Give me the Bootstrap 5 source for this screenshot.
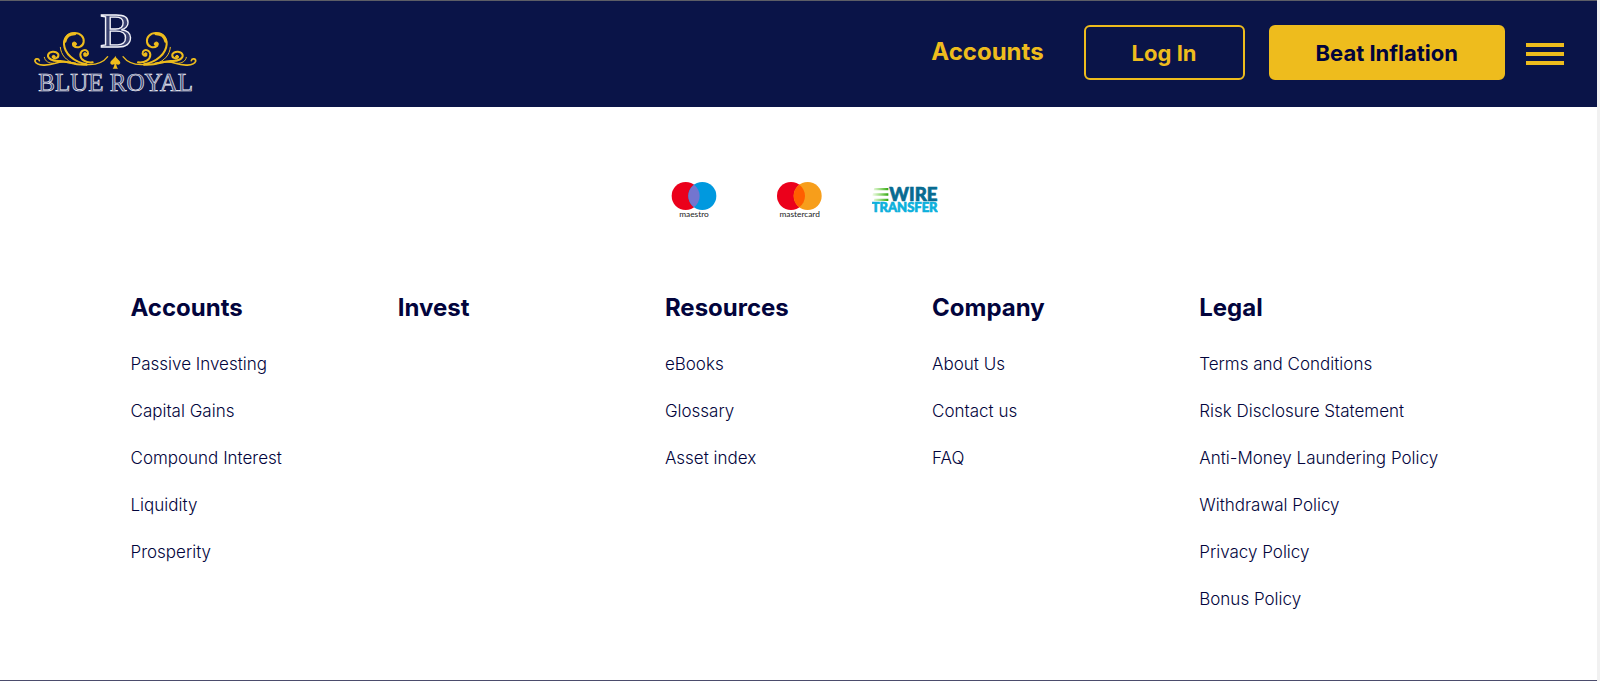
<!DOCTYPE html>
<html lang="en">
<head>
<meta charset="utf-8">
<meta name="viewport" content="width=device-width, initial-scale=1">
<title>Blue Royal</title>
<link href="https://cdn.jsdelivr.net/npm/bootstrap@5.3.0/dist/css/bootstrap.min.css" rel="stylesheet">
<style>
:root { --navy: #0a1448; --ink: #02043c; --gold: #eebc1d; }
body { font-family: Inter, "Liberation Sans", sans-serif; color: var(--ink); background: #fff; border-right: 3px solid #f1f1f1; }
.site-header { background: var(--navy); border-top: 1px solid #5d5e66; padding: 0 33px 0 20px; }
.brand-logo { width: 190px; height: 106px; }
.header-actions { padding-bottom: 4px; }
.top-link { color: var(--gold); font-size: 24px; line-height: 32px; font-weight: 700; margin-right: 40px; }
.site-header .btn { font-size: 22px; line-height: 32px; font-weight: 700; border: 2px solid var(--gold); border-radius: 6px; padding: 10px 45px 9px; }
.site-header .btn-login { color: var(--gold); margin-right: 24px; padding-inline: 46px; }
.btn-beat { color: var(--ink); background: var(--gold); margin-right: 21px; }
.menu-toggle { width: 38px; gap: 5px; }
.menu-toggle span { height: 4px; background: var(--gold); }
.payments { gap: 40px; padding: 73px 0 0 2px; }
.footer-grid { max-width: 1336px; padding: 72px 0 40px; }
.footer-title { font-size: 24px; line-height: 32px; font-weight: 700; margin-bottom: 27px; }
.footer-links { gap: 20px; font-size: 17px; line-height: 27px; font-weight: 300; }
.footer-links a { color: var(--ink); }
.site-footer { border-bottom: 1px solid #4b4c6c; }
</style>
</head>
<body class="min-vh-100 d-flex flex-column">
<header class="site-header d-flex align-items-center">
  <a href="#" class="me-auto d-block" aria-label="Blue Royal">
    <svg class="brand-logo d-block" viewBox="0 3 570 318">
      <defs>
        <g id="flourish" fill="none" stroke="#eebc1d" stroke-linecap="round">
          <path stroke-width="6" d="M200 193C160 186 134 160 132 133C131 112 146 99 164 99C182 99 193 112 191 126C189 140 172 147 160 137"/>
          <path stroke-width="4" d="M263 170C248 190 226 196 196 193"/>
          <path stroke-width="9" d="M135 124C138 108 150 101 164 101"/>
          <circle cx="163" cy="132" r="6" fill="#eebc1d" stroke-width="3"/>
          <path stroke-width="6" d="M218 187C197 190 181 178 181 164C182 151 196 146 203 155C207 164 199 170 193 166"/>
          <circle cx="195" cy="162" r="4" fill="#eebc1d" stroke-width="3"/>
          <path stroke-width="3" d="M121 142C123 165 138 181 162 191"/>
          <path stroke-width="6" d="M200 194C160 197 140 181 118 183C98 184 82 176 84 165C87 153 108 151 115 163C117 174 105 178 98 171"/>
          <circle cx="101" cy="170" r="4" fill="#eebc1d" stroke-width="3"/>
          <path stroke-width="5" d="M166 190C145 185 125 182 106 190C86 197 50 199 45 184C44 175 56 174 58 182"/>
          <path stroke-width="3" d="M73 172C75 184 86 190 101 190"/>
        </g>
      </defs>
      <use href="#flourish"/>
      <use href="#flourish" transform="translate(572 0) scale(-1 1)"/>
      <path fill="#eebc1d" d="M286 167C289 177 302 181 301 189C299 196 292 194 289 192C289 198 291 202 294 206H278C281 202 283 198 283 192C280 194 272 196 271 189C270 181 283 177 286 167Z"/>
      <g font-family="'Liberation Serif', serif" text-anchor="middle" stroke="#f0f1f8">
        <text x="289" y="141" font-size="148" fill="#3a4270" stroke-width="4">B</text>
        <text x="287" y="272" font-size="75" fill="#3a4270" stroke-width="2">BLUE ROYAL</text>
      </g>
    </svg>
  </a>
  <div class="header-actions d-flex align-items-center">
    <a href="#" class="top-link text-decoration-none">Accounts</a>
    <button type="button" class="btn btn-login">Log In</button>
    <button type="button" class="btn btn-beat">Beat Inflation</button>
  </div>
  <button type="button" class="menu-toggle border-0 bg-transparent p-0 d-grid" aria-label="Menu"><span></span><span></span><span></span></button>
</header>

<footer class="site-footer flex-grow-1">
  <div class="payments d-flex justify-content-center">
    <svg width="65" height="40" viewBox="36 30 195 120" role="img" aria-label="Maestro">
      <circle cx="107" cy="78" r="42" fill="#eb001b"/><circle cx="157" cy="78" r="42" fill="#0099df"/>
      <path fill="#7375cf" d="M132 44.300A42 42 0 0 1 132 111.700A42 42 0 0 1 132 44.300Z"/>
      <text x="132" y="141" text-anchor="middle" font-family="Lato, sans-serif" font-size="25" fill="#222">maestro</text>
    </svg>
    <svg width="65" height="40" viewBox="351 30 195 120" role="img" aria-label="Mastercard">
      <circle cx="423" cy="78" r="42" fill="#eb001b"/><circle cx="473" cy="78" r="42" fill="#f79e1b"/>
      <path fill="#ff5f00" d="M448 44.300A42 42 0 0 1 448 111.700A42 42 0 0 1 448 44.300Z"/>
      <text x="449" y="141" text-anchor="middle" font-family="Lato, sans-serif" font-size="25" fill="#222">mastercard</text>
    </svg>
    <svg width="66" height="40" viewBox="665 30 198 120" role="img" aria-label="Wire Transfer">
      <defs><linearGradient id="speed"><stop offset="0" stop-color="#5fd01c" stop-opacity=".1"/><stop offset="1" stop-color="#2fa50e"/></linearGradient></defs>
      <path fill="url(#speed)" d="M672 54H714V61H670ZM668 70H714V77H666ZM672 86H714V93H670Z"/>
      <g font-family="Lato, sans-serif" font-weight="900">
        <text x="717" y="93" font-size="56" fill="#086b91" stroke="#086b91" stroke-width="2">WIRE</text>
        <text x="664" y="125" font-size="39" fill="#0cb0dc" stroke="#0cb0dc" stroke-width="2">TRANSFER</text>
      </g>
    </svg>
  </div>
  <div class="footer-grid container-fluid">
    <div class="row row-cols-5 g-0">
      <div class="col"><h2 class="footer-title">Accounts</h2>
        <ul class="footer-links list-unstyled d-grid mb-0">
          <li><a class="text-decoration-none" href="#">Passive Investing</a></li>
          <li><a class="text-decoration-none" href="#">Capital Gains</a></li>
          <li><a class="text-decoration-none" href="#">Compound Interest</a></li>
          <li><a class="text-decoration-none" href="#">Liquidity</a></li>
          <li><a class="text-decoration-none" href="#">Prosperity</a></li>
        </ul></div>
      <div class="col"><h2 class="footer-title">Invest</h2></div>
      <div class="col"><h2 class="footer-title">Resources</h2>
        <ul class="footer-links list-unstyled d-grid mb-0">
          <li><a class="text-decoration-none" href="#">eBooks</a></li>
          <li><a class="text-decoration-none" href="#">Glossary</a></li>
          <li><a class="text-decoration-none" href="#">Asset index</a></li>
        </ul></div>
      <div class="col"><h2 class="footer-title">Company</h2>
        <ul class="footer-links list-unstyled d-grid mb-0">
          <li><a class="text-decoration-none" href="#">About Us</a></li>
          <li><a class="text-decoration-none" href="#">Contact us</a></li>
          <li><a class="text-decoration-none" href="#">FAQ</a></li>
        </ul></div>
      <div class="col"><h2 class="footer-title">Legal</h2>
        <ul class="footer-links list-unstyled d-grid mb-0">
          <li><a class="text-decoration-none" href="#">Terms and Conditions</a></li>
          <li><a class="text-decoration-none" href="#">Risk Disclosure Statement</a></li>
          <li><a class="text-decoration-none" href="#">Anti-Money Laundering Policy</a></li>
          <li><a class="text-decoration-none" href="#">Withdrawal Policy</a></li>
          <li><a class="text-decoration-none" href="#">Privacy Policy</a></li>
          <li><a class="text-decoration-none" href="#">Bonus Policy</a></li>
        </ul></div>
    </div>
  </div>
</footer>
<script src="https://cdn.jsdelivr.net/npm/bootstrap@5.3.0/dist/js/bootstrap.bundle.min.js"></script>
</body>
</html>
